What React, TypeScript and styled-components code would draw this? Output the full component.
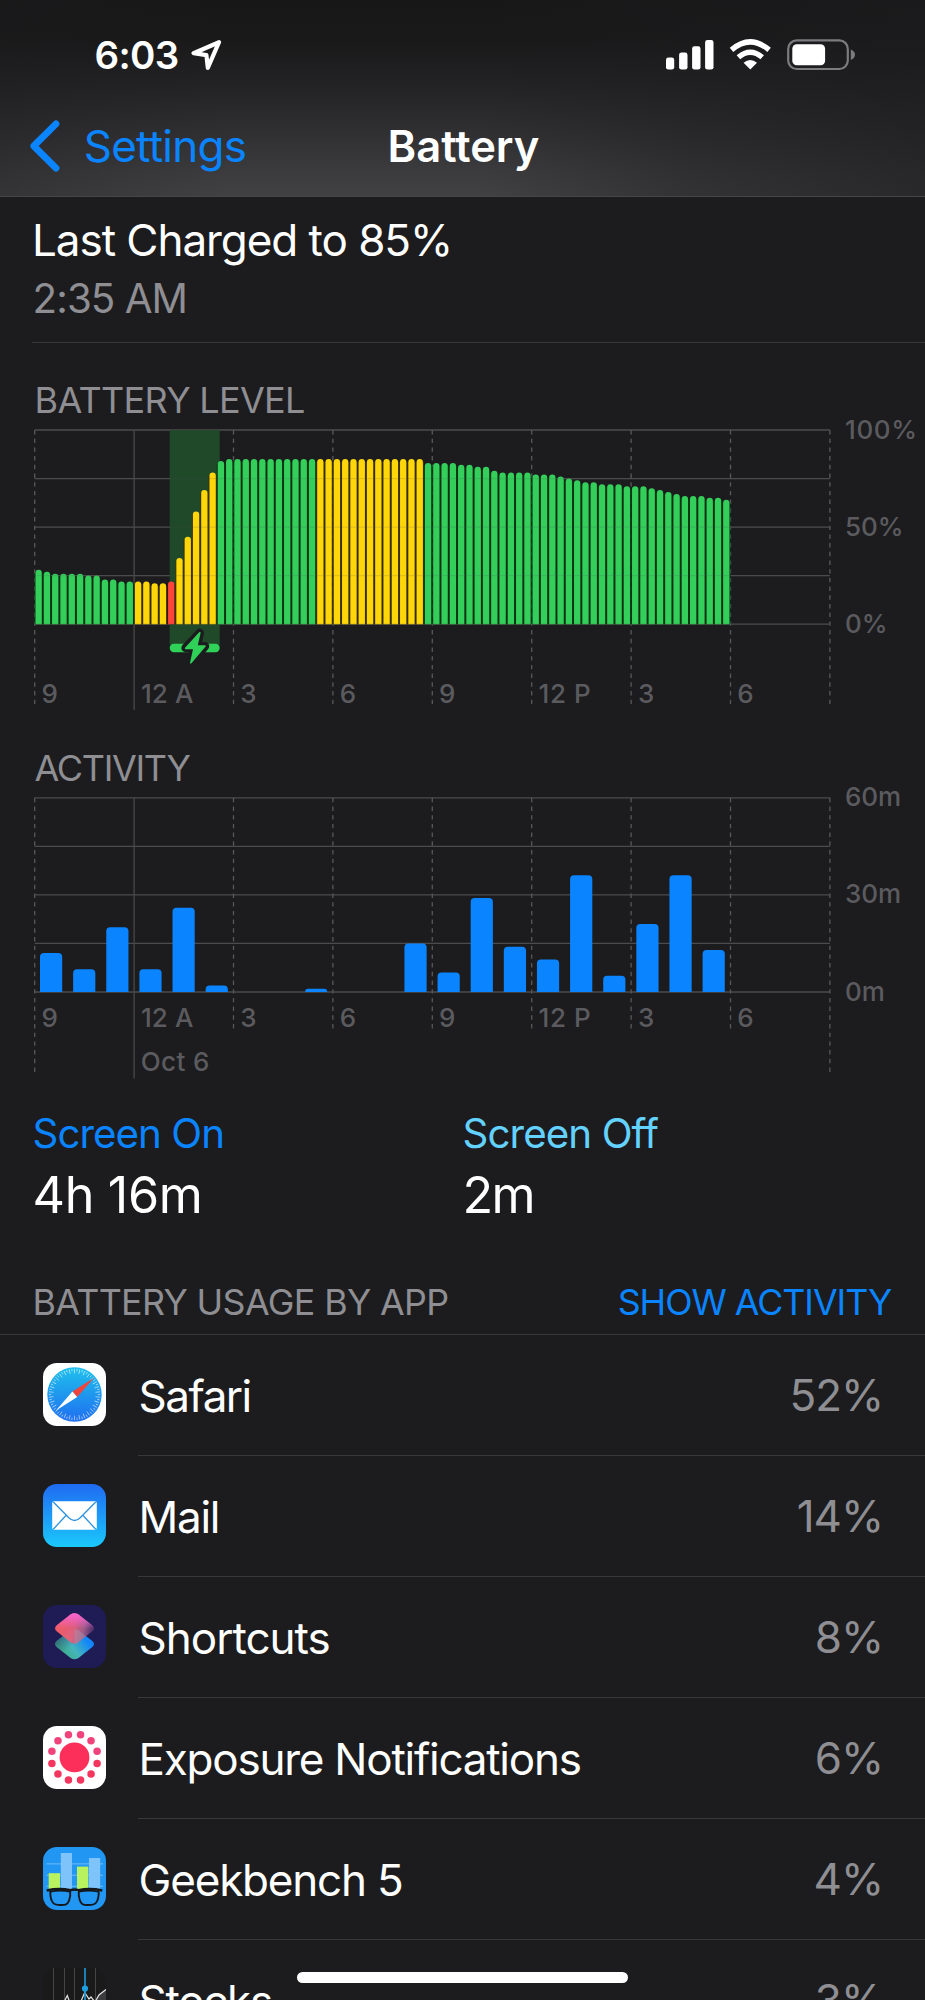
import React from "react";
import styled, { createGlobalStyle } from "styled-components";

const blue = "#0a84ff";
const gray = "#8e8e93";
const separator = "#38383a";
const page = "#1c1c1e";
const sans = `"Inter", "Liberation Sans", sans-serif`;

const GlobalStyle = createGlobalStyle`
  html, body { margin: 0; background: ${page}; }
  body { font-family: ${sans}; color: #fff; overflow: hidden; }
  h1, h2, p { margin: 0; font-weight: 400; }
`;

const Screen = styled.main`
  position: relative;
  width: 925px;
  height: 2000px;
  overflow: hidden;
  background: ${page};
`;

const Text = styled.span<{ $size: number; $line: number; $track?: number; $color?: string; $weight?: number }>`
  display: block;
  white-space: nowrap;
  font-size: ${(p) => p.$size}px;
  line-height: ${(p) => p.$line}px;
  letter-spacing: ${(p) => p.$track ?? 0}px;
  color: ${(p) => p.$color ?? "#fff"};
  font-weight: ${(p) => p.$weight ?? 400};
`;

/* Header */

const Header = styled.header`
  height: 196px;
  border-bottom: 1px solid #464648;
  background:
    linear-gradient(90deg, rgba(28, 28, 30, 0.35) 0%, rgba(28, 28, 30, 0) 25%, rgba(28, 28, 30, 0) 52%, rgba(28, 28, 30, 0.4) 75%, rgba(28, 28, 30, 0.65) 100%),
    linear-gradient(180deg, #171718 0%, #19191a 20%, #222224 42%, #303032 68%, #3c3c3e 88%, #414143 100%);
`;

const StatusBar = styled.div`
  display: flex;
  align-items: center;
  justify-content: space-between;
  height: 110px;
  padding: 0 69px 0 94.5px;
`;

const StatusLeft = styled.div`
  display: flex;
  align-items: center;
  gap: 12px;
`;

const NavBar = styled.nav`
  display: grid;
  grid-template-columns: 1fr auto 1fr;
  align-items: center;
  height: 71px;
  padding-left: 28px;
  padding-right: 26px;
`;

const Back = styled.div`
  display: flex;
  align-items: center;
  gap: 21.7px;
`;

/* Summary */

const LastCharge = styled.section`
  margin-left: 32px;
  padding: 13px 0 15px;
  border-bottom: 1px solid ${separator};

  p:last-child { padding: 1px 0 0 0.6px; }
`;

const ChartSection = styled.section<{ $top: number }>`
  padding-top: ${(p) => p.$top}px;

  svg { display: block; overflow: visible; }
`;

const ChartTitle = styled(Text)`
  padding-left: 34.6px;
`;

const Axis = styled.text<{ $track?: number }>`
  font-family: ${sans};
  font-size: 26px;
  font-weight: 500;
  letter-spacing: ${(p) => p.$track ?? 0}px;
  fill: #5b5b5f;
`;

const ScreenTime = styled.section`
  display: grid;
  grid-template-columns: 430px 1fr;
  padding: 30px 0 0 32.5px;
`;

const UsageHeader = styled.div`
  display: flex;
  justify-content: space-between;
  padding: 51px 33.8px 12px 32.4px;
`;

const AppList = styled.div`
  border-top: 1px solid ${separator};
`;

const AppRow = styled.div`
  display: flex;
  height: 121px;
  padding-left: 43px;

  svg { flex: none; margin-top: 28.4px; margin-right: 32px; }
`;

const AppRowBody = styled.div`
  flex: 1;
  display: flex;
  align-items: center;
  justify-content: space-between;
  padding-right: 42px;
  border-bottom: 1px solid ${separator};
`;

const AppName = styled(Text)`
  padding: 1px 0 0 0.6px;
`;

const HomeIndicator = styled.div`
  position: absolute;
  left: 297px;
  top: 1972px;
  width: 331px;
  height: 11px;
  border-radius: 6px;
  background: #fff;
`;

/* Status icons */

const LocationArrow = () => (
  <svg width="32" height="32" viewBox="0 0 32 32" fill="none" stroke="#fff" strokeWidth="4.2" strokeLinejoin="round">
    <path d="M28 3.2 2.6 14.2l12.8 1.9L16.8 28.8Z" />
  </svg>
);

const StatusIcons = () => (
  <svg width="190" height="32" viewBox="666 38.7 190 32">
    <g fill="#fff">
      <rect x="666" y="57.3" width="8.2" height="12" rx="2.4" />
      <rect x="679.1" y="52.3" width="8.4" height="17" rx="2.4" />
      <rect x="692.1" y="46" width="8.4" height="23.3" rx="2.4" />
      <rect x="705.1" y="39.7" width="8.4" height="29.6" rx="2.4" />
      <path d="M750.3 69.2 743.6 62.4Q750.3 57 757 62.4Z" />
    </g>
    <g fill="none" stroke="#fff" strokeWidth="5.4">
      <path d="M731.5 49.6Q750.3 33.6 769.1 49.6" />
      <path d="M738.4 57Q750.3 46.8 762.2 57" />
    </g>
    <rect x="788.2" y="40.1" width="59.6" height="28.6" rx="8.5" fill="none" stroke="#7c7c7e" strokeWidth="2.2" />
    <path d="M850.8 49.2Q855 51 855 54.4T850.8 59.6Z" fill="#7c7c7e" />
    <rect x="792.3" y="44" width="32.8" height="21" rx="4.5" fill="#fff" />
  </svg>
);

const Chevron = () => (
  <svg width="34" height="54" viewBox="28 119.5 34 54" fill="none" stroke={blue} strokeWidth="6.8" strokeLinecap="round" strokeLinejoin="round">
    <path d="M56 124.4 33.8 146.5 56 168.6" />
  </svg>
);

/* Charts */

const LEFT = 34.7;
const STEP = 99.4;
const HOURS = ["9", "12 A", "3", "6", "9", "12 P", "3", "6"];

const levels = [
  28, 27, 26, 26, 26, 26, 25, 25, 23, 23, 22, 22, 22, 22, 21, 21, 22, 34, 45, 58, 69, 78, 84,
  ...Array(24).fill(85),
  83, 83, 83, 83, 82, 82, 81, 81, 79, 78, 78, 78, 78, 77, 77, 77, 76, 75, 74, 73, 73, 72, 72, 72,
  71, 71, 71, 70, 69, 68, 67, 66, 66, 66, 65, 65, 64,
];

const minutes = [12, 7, 20, 7, 26, 2, 0, 0, 1, 0, 0, 15, 6, 29, 14, 10, 36, 5, 21, 36, 13];

const tone = (i: number) => {
  if (i === 16) return { bar: "#ff453a", gap: "#3d0f0c" };
  if ((i >= 12 && i <= 21) || (i >= 34 && i <= 46)) return { bar: "#ffd60a", gap: "#3a3206" };
  return { bar: "#34cf5a", gap: "#093513" };
};

const Grid = ({ top, labelY, ends, inner, solid, opacity = 1 }: { top: number; labelY?: number; ends: number; inner: number; solid: number; opacity?: number }) => (
  <g opacity={opacity}>
    {[0, 1, 2, 3, 4].map((n) => (
      <line key={n} x1={LEFT} x2={LEFT + STEP * 8} y1={top + n * 48.55} y2={top + n * 48.55} stroke="#4b4b4d" strokeWidth="1.3" />
    ))}
    {Array.from({ length: 9 }, (_, n) => {
      const x = LEFT + STEP * n;
      const end = n === 1 ? solid : n === 0 || n === 8 ? ends : inner;
      return (
        <line key={n} x1={x} x2={x} y1={top} y2={end} stroke={n === 1 ? "#48484a" : "#58585b"} strokeWidth="1.3" strokeDasharray={n === 1 ? undefined : "4.4 4.3"} />
      );
    })}
    {labelY !== undefined &&
      HOURS.map((h, n) => (
        <Axis key={n} x={LEFT + STEP * n + 6.8} y={labelY} $track={h === "12 A" ? 0.1 : h === "12 P" ? 0.6 : 0}>{h}</Axis>
      ))}
  </g>
);

const LevelChart = () => (
  <svg width="925" height="300" viewBox="0 420 925 300">
    <Grid top={430} labelY={702.7} ends={707} inner={707} solid={710} />
    <rect x="169.7" y="430" width="50" height="215" fill="#20492a" />
    <rect x="169.7" y="643.8" width="50" height="8.4" rx="4.2" fill="#30d158" />
    {levels.map((v, i) => {
      const x = 35.5 + i * 8.285;
      const h = v * 1.943;
      const t = tone(i);
      return (
        <g key={i}>
          <rect x={x - 1} y={627.2 - h} width="8.3" height={h - 3} fill={t.gap} />
          <path d={`M${x} 624.2V${627.3 - h}a3.15 3.15 0 0 1 6.3 0V624.2Z`} fill={t.bar} />
        </g>
      );
    })}
    <Grid top={430} ends={624} inner={624} solid={624} opacity={0.15} />
    <path d="M199.8 632.8 185.6 648h8.4L190.8 662.8 205 646.2h-8.2Z" fill={page} stroke={page} strokeWidth="8.5" strokeLinejoin="round" />
    <path d="M199.8 632.8 185.6 648.4h8.4L190.8 662.8 205 646h-8.2Z" fill="#30d158" stroke="#30d158" strokeWidth="1.6" strokeLinejoin="round" />
    <Axis x="845" y="439" $track={0.6}>100%</Axis>
    <Axis x="845" y="536">50%</Axis>
    <Axis x="845" y="633">0%</Axis>
  </svg>
);

const ActivityChart = () => (
  <svg width="925" height="292" viewBox="0 788 925 292">
    <Grid top={797.8} labelY={1027.3} ends={1075} inner={1031} solid={1078.5} />
    {minutes.map((m, i) => {
      if (!m) return null;
      const x = 40 + i * 33.13;
      const h = m * 3.24;
      const r = Math.min(4, h);
      return <path key={i} d={`M${x} 992V${992 - h + r}q0 ${-r} ${r} ${-r}h${22.2 - 2 * r}q${r} 0 ${r} ${r}V992Z`} fill={blue} />;
    })}
    <Axis x="140.7" y="1070.7" $track={0.4}>Oct 6</Axis>
    <Axis x="845" y="806.3" $track={-0.1}>60m</Axis>
    <Axis x="845" y="903.4" $track={-0.1}>30m</Axis>
    <Axis x="845" y="1000.7">0m</Axis>
  </svg>
);

/* App icons */

const SafariIcon = () => (
  <svg width="63" height="63" viewBox="0 0 63 63">
    <defs>
      <linearGradient id="safari" x1="0" y1="0" x2="0" y2="1">
        <stop offset="0" stopColor="#1fc0ec" />
        <stop offset="1" stopColor="#1f6ff0" />
      </linearGradient>
    </defs>
    <rect width="63" height="63" rx="14" fill="#fff" />
    <circle cx="31.5" cy="31.5" r="27.2" fill="url(#safari)" />
    {Array.from({ length: 60 }, (_, i) => (
      <line key={i} x1="31.5" x2="31.5" y1="5.8" y2={i % 2 ? 8.2 : 10.4} stroke="#fff" strokeOpacity="0.75" strokeWidth="0.7" transform={`rotate(${i * 6} 31.5 31.5)`} />
    ))}
    <path d="M50.8 15 34.2 34 29.4 28.6Z" fill="#f0443c" />
    <path d="M13 47.5 29.4 28.6 34.2 34Z" fill="#fff" />
  </svg>
);

const MailIcon = () => (
  <svg width="63" height="63" viewBox="0 0 63 63">
    <defs>
      <linearGradient id="mail" x1="0" y1="0" x2="0" y2="1">
        <stop offset="0" stopColor="#1f6bf2" />
        <stop offset="1" stopColor="#1bc8fb" />
      </linearGradient>
    </defs>
    <rect width="63" height="63" rx="14" fill="url(#mail)" />
    <rect x="9.2" y="17.3" width="44.6" height="28.5" rx="2" fill="#fff" />
    <g fill="none" stroke="#2d93e0" strokeWidth="1.3">
      <path d="M10.3 18 25.8 33.8Q31.5 39.3 37.2 33.8L52.7 18" />
      <path d="M10.3 45.2 23.2 31.3M52.7 45.2 39.8 31.3" />
    </g>
  </svg>
);

const ShortcutsIcon = () => (
  <svg width="63" height="63" viewBox="0 0 63 63">
    <defs>
      <linearGradient id="scTop" x1="0.1" y1="0.4" x2="0.95" y2="0.55">
        <stop offset="0" stopColor="#fb5f66" />
        <stop offset="0.45" stopColor="#e8607c" />
        <stop offset="0.75" stopColor="#a8608c" />
        <stop offset="1" stopColor="#5a3570" />
      </linearGradient>
      <linearGradient id="scPink" x1="0.5" y1="0" x2="0.5" y2="0.5">
        <stop offset="0" stopColor="#f765d8" />
        <stop offset="1" stopColor="#f765d8" stopOpacity="0" />
      </linearGradient>
      <linearGradient id="scBottom" x1="0.25" y1="0.8" x2="0.85" y2="0.45">
        <stop offset="0" stopColor="#3fae93" />
        <stop offset="0.4" stopColor="#45b5bc" />
        <stop offset="1" stopColor="#1286fa" />
      </linearGradient>
      <linearGradient id="scShade" x1="0" y1="0.2" x2="0.4" y2="0.6">
        <stop offset="0" stopColor="#1e1b55" stopOpacity="0.6" />
        <stop offset="1" stopColor="#1e1b55" stopOpacity="0" />
      </linearGradient>
    </defs>
    <rect width="63" height="63" rx="14" fill="#1e1b55" />
    <path d="M27.5 25.3Q31.5 22.4 35.5 25.3L49 35.7Q53 39 49 42.3L35.5 52.9Q31.5 55.8 27.5 52.9L14 42.3Q10 39 14 35.7Z" fill="url(#scBottom)" />
    <path d="M27.5 25.3Q31.5 22.4 35.5 25.3L49 35.7Q53 39 49 42.3L35.5 52.9Q31.5 55.8 27.5 52.9L14 42.3Q10 39 14 35.7Z" fill="url(#scShade)" />
    <path d="M27.5 9.6Q31.5 6.7 35.5 9.6L49 20Q53 23.3 49 26.6L35.5 37.2Q31.5 40.1 27.5 37.2L14 26.6Q10 23.3 14 20Z" fill="url(#scTop)" fillOpacity="0.95" />
    <path d="M27.5 9.6Q31.5 6.7 35.5 9.6L49 20Q53 23.3 49 26.6L35.5 37.2Q31.5 40.1 27.5 37.2L14 26.6Q10 23.3 14 20Z" fill="url(#scPink)" />
    <path d="M35.5 37.2 43 31.3 35.5 25.3Q33.5 24 31.5 24V39Q33.5 39 35.5 37.2Z" fill="#a9a0b0" fillOpacity="0.35" />
  </svg>
);

const ExposureIcon = () => (
  <svg width="63" height="63" viewBox="0 0 63 63">
    <rect width="63" height="63" rx="14" fill="#fff" />
    <circle cx="31.5" cy="31.4" r="14.9" fill="#fc2f5a" />
    {Array.from({ length: 12 }, (_, i) => {
      const a = ((i * 30 + 15) * Math.PI) / 180;
      return <circle key={i} cx={31.5 + 23.4 * Math.sin(a)} cy={31.4 - 23.4 * Math.cos(a)} r="3.75" fill={Math.cos(a) > 0 ? "#f0437c" : "#f4365f"} />;
    })}
  </svg>
);

const GeekbenchIcon = () => (
  <svg width="63" height="63" viewBox="0 0 63 63">
    <rect width="63" height="63" rx="14" fill="#2196f3" />
    <path d="M3.5 16.9H60M3.5 28.2H60M3.5 39.3H60" stroke="#6cbdf9" strokeWidth="1" />
    <rect x="17.8" y="6" width="11.2" height="38" fill="#7ec4fb" />
    <rect x="46" y="11" width="11.2" height="34" fill="#7ec4fb" />
    <rect x="5.7" y="26.2" width="11.3" height="17.5" fill="#b8f35f" />
    <rect x="34" y="19.6" width="11.3" height="25" fill="#b8f35f" />
    <g fill="#2196f3" stroke="#14181d" strokeWidth="1.9">
      <path d="M7.3 44.6Q17 42.6 27.2 44.6C27.8 50.5 25.8 57.6 21 57.9 16.5 58.3 12 58.1 10.2 56 8 53.4 7.2 48 7.3 44.6Z" />
      <path d="M55.7 44.6Q46 42.6 35.8 44.6C35.2 50.5 37.2 57.6 42 57.9 46.5 58.3 51 58.1 52.8 56 55 53.4 55.8 48 55.7 44.6Z" />
    </g>
    <path d="M3.7 43.5Q16 40.8 27.5 43.2Q31.5 41.6 35.5 43.2Q47 40.8 59.3 43.5" fill="none" stroke="#14181d" strokeWidth="2.5" />
  </svg>
);

const StocksIcon = () => (
  <svg width="63" height="63" viewBox="0 0 63 63">
    <rect width="63" height="63" rx="14" fill="#1a1a1b" />
    <path d="M10.5 0V63M21.5 0V63M31.5 0V63M52.5 0V63" stroke="#4c4c4e" strokeWidth="0.9" />
    <path d="M51 38 56 27 63 21.5V50H51Z" fill="#3c3c3f" />
    <path d="M19 38 24.3 27.5 28 38 36 38 41.7 24.5 46 31 48 29 52 34 56 27 63 21.5" fill="none" stroke="#e4e4e6" strokeWidth="1.2" />
    <path d="M42 0V63" stroke="#1c94d2" strokeWidth="1.7" />
    <circle cx="42" cy="20.5" r="3.1" fill="#1ba1e2" />
  </svg>
);

const apps = [
  { name: "Safari", track: -1.5, share: "52%", Icon: SafariIcon },
  { name: "Mail", track: -1.3, share: "14%", Icon: MailIcon },
  { name: "Shortcuts", track: -1, share: "8%", Icon: ShortcutsIcon },
  { name: "Exposure Notifications", track: -1.24, share: "6%", Icon: ExposureIcon },
  { name: "Geekbench 5", track: -1.2, share: "4%", Icon: GeekbenchIcon },
  { name: "Stocks", track: -1.3, share: "3%", Icon: StocksIcon },
];

export default function App() {
  return (
    <>
      <GlobalStyle />
      <Screen>
        <Header>
          <StatusBar>
            <StatusLeft>
              <Text $size={38.5} $line={48} $track={-0.7} $weight={600}>6:03</Text>
              <LocationArrow />
            </StatusLeft>
            <StatusIcons />
          </StatusBar>
          <NavBar>
            <Back>
              <Chevron />
              <Text $size={44} $line={60} $track={-0.75} $color={blue}>Settings</Text>
            </Back>
            <Text as="h1" $size={43.5} $line={60} $track={0} $weight={600}>Battery</Text>
          </NavBar>
        </Header>

        <LastCharge>
          <Text as="p" $size={44} $line={60} $track={-1.05}>Last Charged to 85%</Text>
          <Text as="p" $size={40.3} $line={56} $track={-0.95} $color={gray}>2:35 AM</Text>
        </LastCharge>

        <ChartSection $top={37}>
          <ChartTitle as="h2" $size={36} $line={40} $track={-0.7} $color={gray}>BATTERY LEVEL</ChartTitle>
          <LevelChart />
        </ChartSection>

        <ChartSection $top={28}>
          <ChartTitle as="h2" $size={36} $line={40} $track={-1.35} $color={gray}>ACTIVITY</ChartTitle>
          <ActivityChart />
        </ChartSection>

        <ScreenTime>
          <div>
            <Text as="p" $size={40.3} $line={48} $track={-0.96} $color={blue}>Screen On</Text>
            <Text as="p" $size={50.3} $line={73} $track={-0.35}>4h 16m</Text>
          </div>
          <div>
            <Text as="p" $size={40.3} $line={48} $track={-0.9} $color="#64d2ff">Screen Off</Text>
            <Text as="p" $size={50.3} $line={73} $track={-1.6}>2m</Text>
          </div>
        </ScreenTime>

        <UsageHeader>
          <Text as="h2" $size={35.8} $line={40} $track={-0.64} $color={gray}>BATTERY USAGE BY APP</Text>
          <Text $size={35.8} $line={40} $track={-1.04} $color={blue}>SHOW ACTIVITY</Text>
        </UsageHeader>

        <AppList>
          {apps.map(({ name, track, share, Icon }) => (
            <AppRow key={name}>
              <Icon />
              <AppRowBody>
                <AppName $size={44} $line={60} $track={track}>{name}</AppName>
                <Text $size={44} $line={60} $track={-1.1} $color={gray}>{share}</Text>
              </AppRowBody>
            </AppRow>
          ))}
        </AppList>
        <HomeIndicator />
      </Screen>
    </>
  );
}
